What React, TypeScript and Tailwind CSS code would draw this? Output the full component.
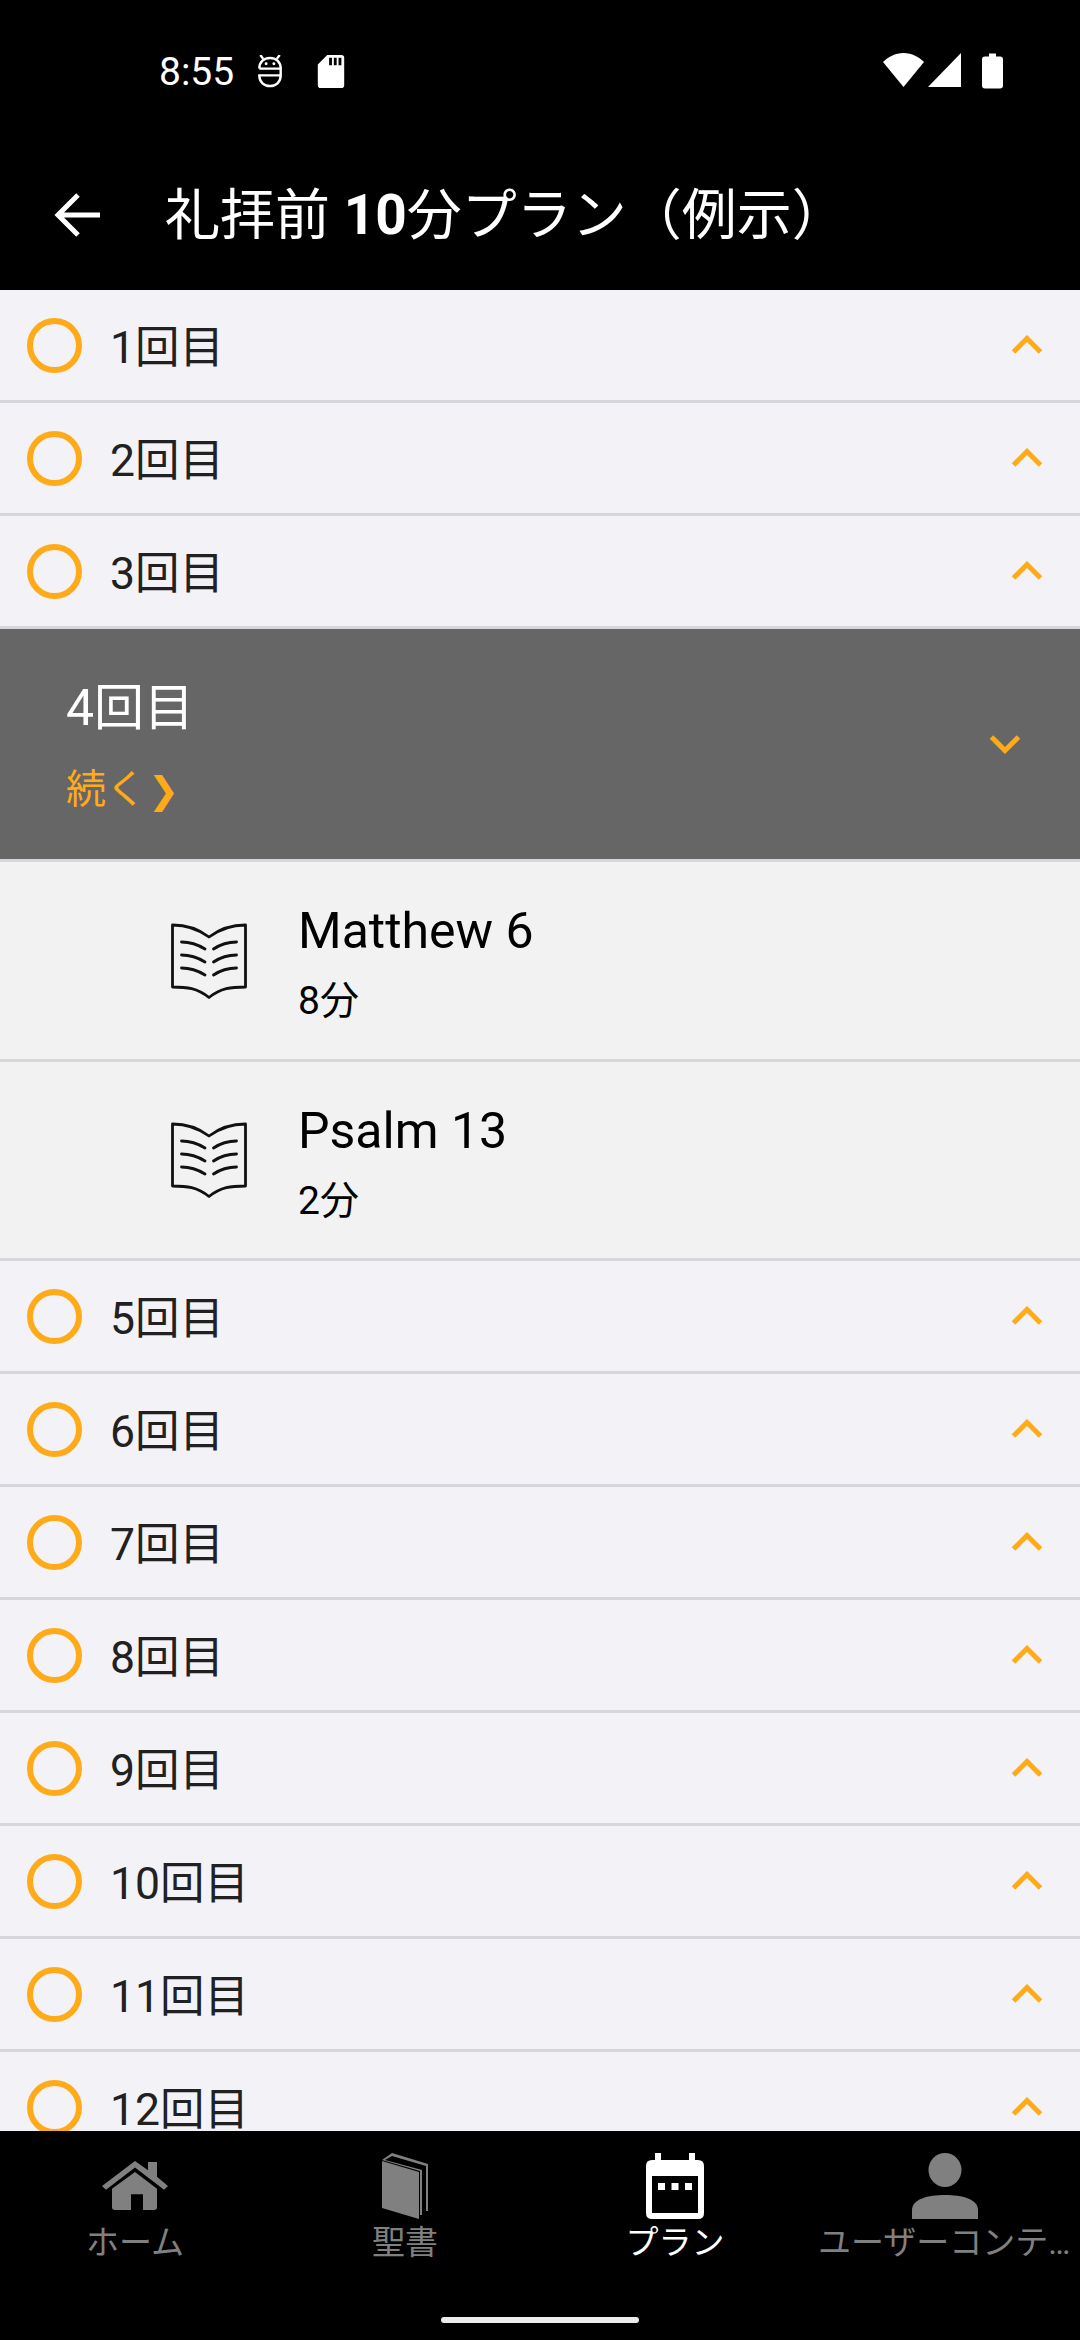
import React from "react";

const FONT = "font-['Roboto','Noto_Sans_CJK_JP',sans-serif]";

function ChevronUp() {
  return (
    <svg width="32" height="20" viewBox="0 0 32 20" className="block">
      <path d="M2.500 17 L16 3.500 L29.500 17" fill="none" stroke="#ffab19" strokeWidth="5" />
    </svg>
  );
}

function ChevronDown() {
  return (
    <svg width="32" height="20" viewBox="0 0 32 20" className="block">
      <path d="M2.500 3 L16 16.500 L29.500 3" fill="none" stroke="#ffab19" strokeWidth="5" />
    </svg>
  );
}

function Row({ label }: { label: string }) {
  return (
    <div className="flex h-[113px] shrink-0 items-center border-b-[3px] border-[#d7d6dc] bg-[#f2f2f7] pl-[27px] pr-[37px]">
      <div className="h-[55px] w-[55px] shrink-0 rounded-full border-[6px] border-[#ffab19]" />
      <div className="ml-[28px] flex-1 pt-[5px] text-[44.500px] leading-[56px] text-[#212121]">{label}</div>
      <ChevronUp />
    </div>
  );
}

function BookOutline() {
  return (
    <svg width="76" height="78" viewBox="0 0 76 78" fill="none" stroke="#111" strokeWidth="2.800" strokeLinecap="round" strokeLinejoin="round" className="block">
      <path d="M1.500 3 C14 3 26 6 38 15 C50 6 62 3 74.500 3 L74.500 65 C60 65 50 66 38 75.500 C26 66 16 65 1.500 65 Z" />
      <path d="M10.500 20 C18 20 26 22 34 27" />
      <path d="M10.500 33 C18 33 26 35 34 40" />
      <path d="M10.500 46 C18 46 26 48 34 53" />
      <path d="M65.500 20 C58 20 50 22 42.500 27" />
      <path d="M65.500 33 C58 33 50 35 42.500 40" />
      <path d="M65.500 46 C58 46 50 48 42.500 53" />
    </svg>
  );
}

function SubRow({ title, mins, h }: { title: string; mins: string; h: string }) {
  return (
    <div className={`flex ${h} shrink-0 items-center border-b-[3px] border-[#d7d6dc] bg-[#f2f2f2] pl-[171px]`}>
      <BookOutline />
      <div className="ml-[51px] flex flex-col pt-[5px] text-black">
        <div className="text-[50px] leading-[60px]">{title}</div>
        <div className="mt-[16px] text-[39px] leading-[48px]">{mins}</div>
      </div>
    </div>
  );
}

function HomeIcon() {
  return (
    <svg width="66" height="50" viewBox="0 0 66 54" preserveAspectRatio="none" fill="#808080" className="block">
      <path d="M33 0 L46 10 L46 1 L55 1 L55 17 L66 27 L62 31 L33 7 L4 31 L0 27 Z" />
      <path d="M33 12 L55 30 L55 50 Q55 53 52 53 L41 53 L41 36 L29 36 L29 53 L13 53 Q10 53 10 50 L10 30 Z" />
    </svg>
  );
}

function BibleIcon() {
  return (
    <svg width="46" height="66" viewBox="0 0 46 66" fill="#808080" className="block">
      <path d="M0 8 L37 19 L37 66 L0 55 Z" />
      <path d="M0 7 L10 0 L46 11 L46 58 L44 58 L44 13 L10 3 L3 7 L40 17 L40 62 L38 62 L38 18 Z" />
    </svg>
  );
}

function CalendarIcon() {
  return (
    <svg width="58" height="66" viewBox="0 0 58 66" className="block">
      <path
        fill="#fff"
        fillRule="evenodd"
        d="M9 0 H15 V7 H43 V0 H49 V7 H52 Q58 7 58 13 V60 Q58 66 52 66 H6 Q0 66 0 60 V13 Q0 7 6 7 H9 Z M6 23 V60 H52 V23 Z"
      />
      <rect x="12" y="30" width="7" height="7" fill="#fff" />
      <rect x="25.500" y="30" width="7" height="7" fill="#fff" />
      <rect x="39" y="30" width="7" height="7" fill="#fff" />
    </svg>
  );
}

function UserIcon() {
  return (
    <svg width="66" height="66" viewBox="0 0 66 66" fill="#808080" className="block">
      <ellipse cx="33" cy="17" rx="16.500" ry="17" />
      <path d="M0 66 V57 C0 46 16 42 33 42 C50 42 66 46 66 57 V66 Z" />
    </svg>
  );
}

function Tab({ icon, label, active, pad = "px-[5px]" }: { icon: React.ReactNode; label: string; active?: boolean; pad?: string }) {
  return (
    <div className="flex min-w-0 flex-col items-center">
      <div className="flex h-[66px] items-center">{icon}</div>
      <div className={`mt-[3px] w-full truncate ${pad} text-center text-[33px] leading-[42px] ${active ? "text-white" : "text-[#808080]"}`}>
        {label}
      </div>
    </div>
  );
}

export default function App() {
  return (
    <div className={`flex h-[2340px] w-[1080px] flex-col overflow-hidden bg-black ${FONT}`}>
      {/* Status bar + title bar */}
      <div className="h-[290px] shrink-0 bg-black">
        <div className="flex h-[145px] items-start pt-[52px] pl-[159px] pr-[77px] text-white">
          <div className="text-[39px] leading-[40px]">8:55</div>
          <svg width="26" height="33" viewBox="0 0 26 34" fill="none" stroke="#fff" strokeWidth="2.500" className="ml-[23px] mt-[3px] block">
            <path d="M3 0 L6 4 M23 0 L20 4" />
            <path d="M2 14 C2 7 7 3 13 3 C19 3 24 7 24 14" />
            <path d="M2 14 H24 V21 H2 C2 28 7 32 13 32 C19 32 24 28 24 21" />
            <circle cx="9" cy="9" r="1.500" fill="#fff" stroke="none" />
            <circle cx="17" cy="9" r="1.500" fill="#fff" stroke="none" />
          </svg>
          <svg width="28" height="33" viewBox="0 0 28 35" className="ml-[34px] mt-[3px] block">
            <path
              fill="#fff"
              fillRule="evenodd"
              d="M10 0 H25 Q28 0 28 3 V32 Q28 35 25 35 H3 Q0 35 0 32 V10 Z M12 3 V11 H15 V3 Z M17 3 V11 H20 V3 Z M22 3 V11 H25 V3 Z"
            />
          </svg>
          <div className="flex-1" />
          <svg width="41" height="34" viewBox="0 0 41 34" className="mt-[1px] block">
            <path fill="#fff" d="M0 9 C5 4 12 0 20.500 0 C29 0 36 4 41 9 L20.500 34 Z" />
          </svg>
          <svg width="33" height="34" viewBox="0 0 33 34" className="ml-[4px] mt-[1px] block">
            <path fill="#fff" d="M33 0 V34 H0 Z" />
          </svg>
          <svg width="21" height="36" viewBox="0 0 21 35" className="ml-[21px] mt-[1px] block">
            <path fill="#fff" d="M7 0 H14 V3 H18 Q21 3 21 6 V32 Q21 35 18 35 H3 Q0 35 0 32 V6 Q0 3 3 3 H7 Z" />
          </svg>
        </div>
        <div className="flex h-[140px] items-center pl-[54px] text-white">
          <svg width="46" height="44" viewBox="0 0 46 44" fill="none" stroke="#fff" strokeWidth="5" className="block">
            <path d="M24 2 L4 22 L24 42 M4 22 H46" />
          </svg>
          <div className="ml-[65px] whitespace-nowrap text-[55px] font-normal leading-[64px]">
            礼拝前 <span className="font-bold">10</span>分プラン（例示）
          </div>
        </div>
      </div>

      {/* List */}
      <div className="flex min-h-0 flex-1 flex-col overflow-hidden bg-[#f2f2f7]">
        <Row label="1回目" />
        <Row label="2回目" />
        <Row label="3回目" />
        <div className="flex h-[233px] shrink-0 items-center border-b-[3px] border-[#d7d6dc] bg-[#666666] pl-[66px] pr-[59px]">
          <div className="flex-1 pt-[4px]">
            <div className="text-[50px] leading-[60px] text-white">4回目</div>
            <div className="mt-[28px] text-[40px] leading-[48px] text-[#ffab19]">
              続く<span className="ml-[2px] text-[37px]">❯</span>
            </div>
          </div>
          <ChevronDown />
        </div>
        <SubRow title="Matthew 6" mins="8分" h="h-[200px]" />
        <SubRow title="Psalm 13" mins="2分" h="h-[199px]" />
        {["5回目", "6回目", "7回目", "8回目", "9回目", "10回目", "11回目", "12回目"].map((l) => (
          <Row key={l} label={l} />
        ))}
      </div>

      {/* Bottom nav */}
      <div className="flex h-[209px] shrink-0 flex-col bg-black pt-[22px]">
        <div className="grid grid-cols-4">
          <Tab icon={<HomeIcon />} label="ホーム" />
          <Tab icon={<BibleIcon />} label="聖書" />
          <Tab icon={<CalendarIcon />} label="プラン" active />
          <Tab icon={<UserIcon />} label="ユーザーコンテンツ" pad="pl-[8px] pr-[2px]" />
        </div>
        <div className="mx-auto mt-[53px] h-[6px] w-[198px] rounded-full bg-[#ececec]" />
      </div>
    </div>
  );
}
